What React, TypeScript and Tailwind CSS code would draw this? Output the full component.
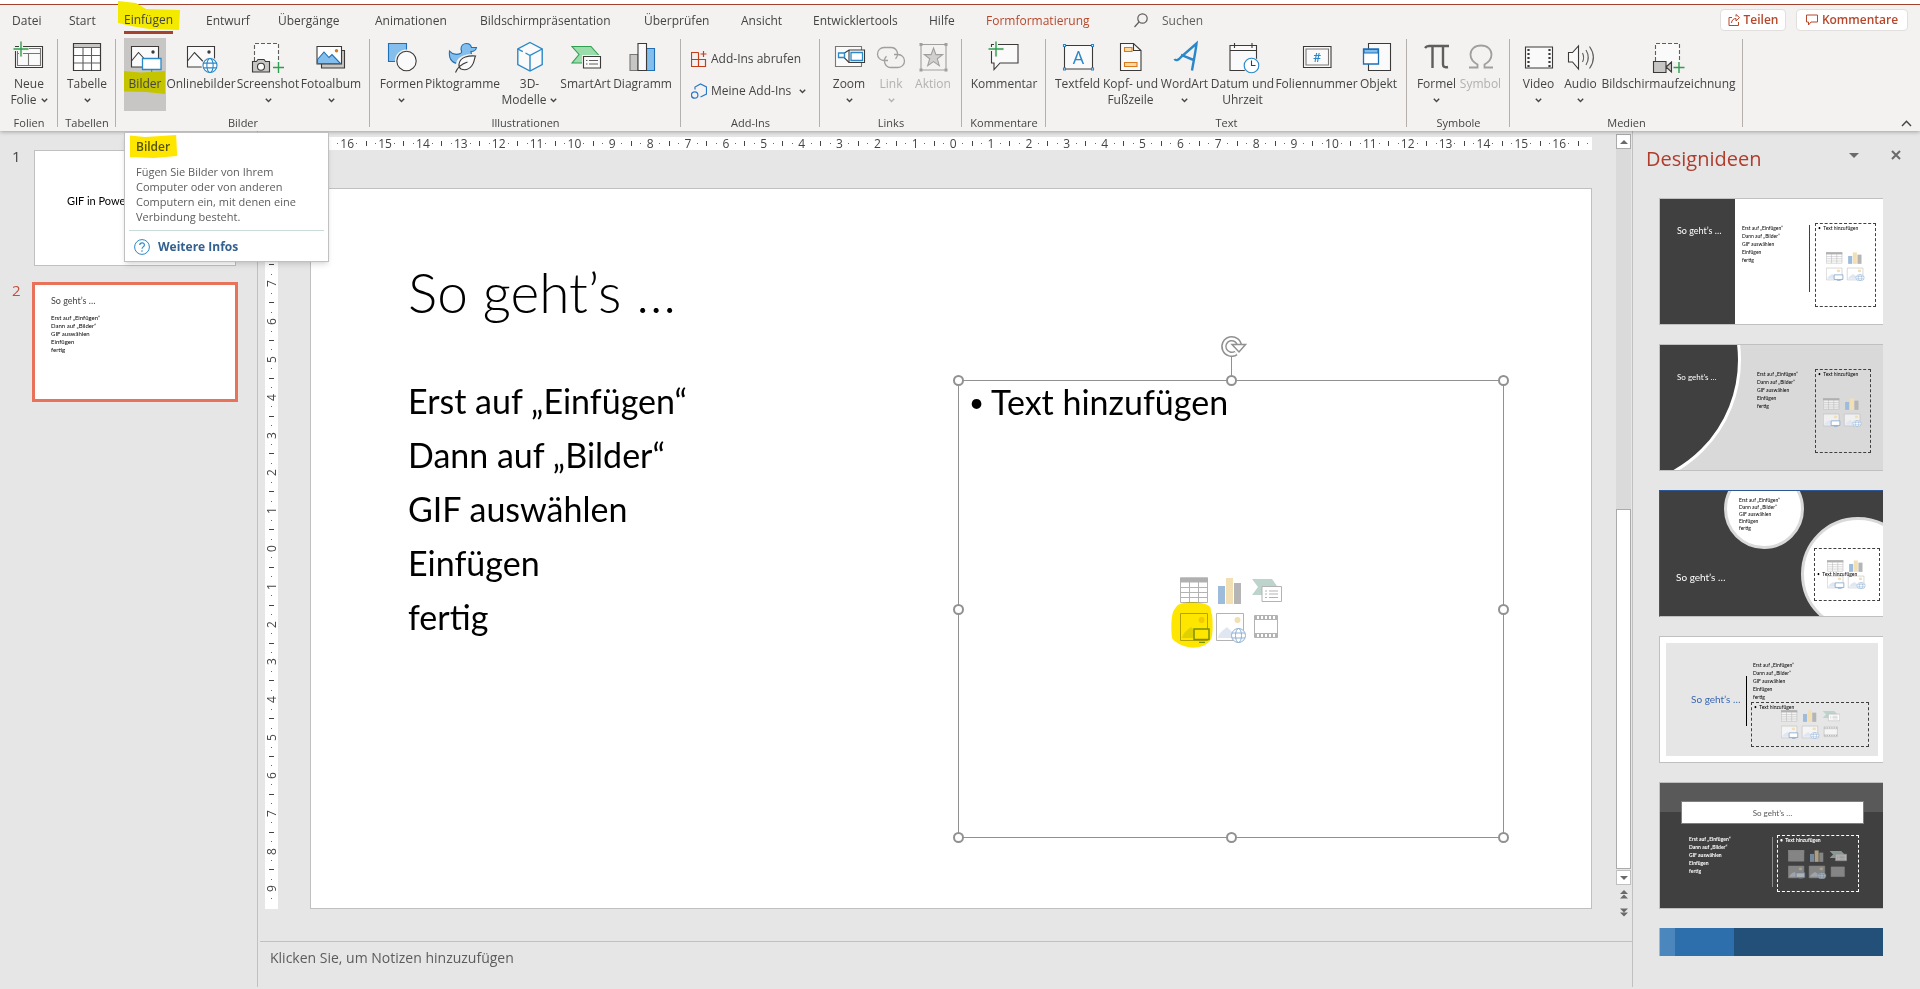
import React from 'react';
import clsx from 'clsx';

const DARK = '#3b3a39';
const BLUE = '#2b88c8';
const GREEN = '#2f9e4f';

const Chevron = ({ className = '' }: { className?: string }) => (
  <svg viewBox="0 0 7 5" className={clsx('inline-block h-[5px] w-[7px]', className)} fill="none" stroke="currentColor" strokeWidth="1.4">
    <path d="M0.8 0.8 3.5 3.5 6.2 0.8" />
  </svg>
);

const Icon = ({ children }: { children: React.ReactNode }) => (
  <svg viewBox="0 0 32 32" className="h-8 w-8 shrink-0 overflow-visible" fill="none" stroke={DARK} strokeWidth="1.1" aria-hidden="true">
    {children}
  </svg>
);

const Globe = ({ cx, cy, r }: { cx: number; cy: number; r: number }) => (
  <g stroke={BLUE} strokeWidth="1.1">
    <circle cx={cx} cy={cy} r={r} fill="#fff" />
    <ellipse cx={cx} cy={cy} rx={r * 0.45} ry={r} />
    <path d={`M${cx - r} ${cy - 2.4}h${r * 2}M${cx - r} ${cy + 2.4}h${r * 2}`} />
  </g>
);

const Plus = ({ x, y, r }: { x: number; y: number; r: number }) => (
  <path d={`M${x - r} ${y}h${r * 2}M${x} ${y - r}v${r * 2}`} stroke={GREEN} strokeWidth="1.4" />
);

const icons: Record<string, React.ReactNode> = {
  neueFolie: (
    <>
      <path d="M2.5 5.5h27v21h-27z" fill="#fafafa" />
      <path d="M4.5 7.5h23v17h-23zM4.5 12.5h23M15.5 12.5v12" stroke="#797775" />
      <path d="M8 0v16M0 8h16" stroke="#f3f2f1" strokeWidth="4" />
      <Plus x={8} y={8} r={7.5} />
    </>
  ),
  tabelle: (
    <>
      <path d="M2.5 2.5h27v27h-27z" fill="#fff" />
      <path d="M3 3h26v3.5h-26z" fill="#c8c6c4" stroke="none" />
      <path d="M2.5 6.5h27M2.5 14.5h27M2.5 22h27M12 6.5v23M20.5 6.5v23" stroke="#605e5c" />
      <path d="M2.5 2.5h27v27h-27z" />
    </>
  ),
  bilder: (
    <>
      <path d="M2.5 5.5h27v20.5h-27z" fill="#fafafa" />
      <path d="M2.5 20 9.5 11.5 15.5 18" />
      <circle cx="24" cy="11" r="1.7" fill={DARK} stroke="none" />
      <path d="M13.5 17.5h18.5v11h-18.5z" fill="#fff" stroke={BLUE} strokeWidth="1.3" />
      <path d="M22.7 28.5v3M19 31.5h7.5" stroke={GREEN} />
    </>
  ),
  onlinebilder: (
    <>
      <path d="M2.5 5.5h27v20.5h-27z" fill="#fafafa" />
      <path d="M2.5 20 9.5 11.5 18.5 21" />
      <circle cx="24" cy="11" r="1.7" fill={DARK} stroke="none" />
      <circle cx="25" cy="24.5" r="8.5" fill="#f3f2f1" stroke="none" />
      <Globe cx={25} cy={24.5} r={7} />
    </>
  ),
  screenshot: (
    <>
      <path d="M2.5 20V2.5h24V21" fill="#fafafa" strokeDasharray="4 2" stroke="#605e5c" />
      <path d="M.5 20.5h4l1.5-2h6l1.5 2h4v10.5h-17z" fill="#c8c6c4" />
      <circle cx="9" cy="25.7" r="3.5" fill="#fff" />
      <Plus x={26.5} y={26.5} r={5.5} />
    </>
  ),
  fotoalbum: (
    <>
      <path d="M6.5 9.5h23v17.5h-23z" fill="#c8c6c4" />
      <path d="M2 5.5h24.5v17.5h-24.5z" fill="#fff" />
      <path d="M2.5 18.5 9 11l5 5.5 3-3 8.5 9H2.5z" fill="#83beec" stroke="#1e6fb5" />
      <circle cx="21.5" cy="9.7" r="1.7" fill="#d87a1c" stroke="none" />
    </>
  ),
  formen: (
    <>
      <path d="M2.5 2.5h18v18h-18z" fill="#83beec" stroke="#1e6fb5" />
      <circle cx="20.5" cy="20" r="11.5" fill="#f3f2f1" stroke="none" />
      <circle cx="20.5" cy="20" r="9.7" fill="#fafafa" />
    </>
  ),
  piktogramme: (
    <>
      <path
        d="M2.5 10c3 3.5 7 4 11 2.5 2-.7 1-2.5.5-4.5 0-3.5 2.5-5.5 5.500-5.5 3 0 4.5 2 5 4h5c-.5 2.5-3 4-5.5 4 1 3 0 8-3 10-3 2.5-12 3-15.500 0-3-2.5-3.500-7-3-10.500z"
        fill="#83beec"
        stroke="#1e6fb5"
      />
      <path d="M28.500 14.500c-6-.5-17 .5-18 8.500-.3 2.500 1 4.500 2.500 5.500 4.500 1.500 9 .5 12-3.500 2.500-3.500 2-7 3.500-10.500z" fill="#f3f2f1" stroke="#f3f2f1" strokeWidth="3" />
      <path d="M28.500 15c-6-.5-15.500.5-16.500 8-.3 2 .5 4 2 5 4 1.500 8 .5 11-3.500 2.500-3.200 2-6.500 3.500-9.500zM8.500 31.500c2-5 6-8.500 12-10.500" fill="#fafafa" />
    </>
  ),
  modelle: (
    <>
      <path d="M16 1.5 28.2 8v15.5L16 30 3.8 23.5V8z" fill="#fafafa" stroke={BLUE} strokeWidth="1.4" />
      <path d="M3.8 8l5 2.7M16 30V14.5L28.2 8M11.500 12l4.500 2.500" stroke={BLUE} strokeWidth="1.4" />
    </>
  ),
  smartart: (
    <>
      <path d="M2 5.5h19l8 9-5 7.5H2l7-8.5z" fill="#9bdcab" stroke={GREEN} />
      <path d="M12 14h20v15h-20z" fill="#f3f2f1" stroke="none" />
      <path d="M13.5 15.5h17v11.500h-17z" fill="#fafafa" />
      <path d="M19 19.5h9M19 23h9M16 19.5h1.5M16 23h1.5" stroke="#605e5c" />
    </>
  ),
  diagramm: (
    <>
      <path d="M3 13.5h8v16h-8z" fill="#c8c6c4" stroke="#797775" />
      <path d="M19.5 7.5h8v22h-8z" fill="#83beec" stroke="#1e6fb5" />
      <path d="M11 2.5h8.5v27h-8.5z" fill="#fafafa" />
    </>
  ),
  zoom: (
    <>
      <path d="M2.5 5.5h26v20h-26z" fill="#fafafa" stroke="#797775" />
      <path d="M11.5 12 16 9h15.5v12.5H16L11.5 17z" fill="#fff" />
      <path d="M16 9v12.5" />
      <path d="M5.5 12h6v4.5h-6zM18 11.5h11.5v8H18z" stroke={BLUE} strokeWidth="1.3" />
    </>
  ),
  link: (
    <g stroke="#a19f9d" strokeWidth="1.3">
      <path d="M13 19.5H9A6.5 6.5 0 0 1 9 6.5h7a6.5 6.5 0 0 1 4.5 11.2" />
      <path d="M19 13.5h4a6.5 6.5 0 0 1 0 13h-7a6.5 6.5 0 0 1-4.5-11.2" />
    </g>
  ),
  aktion: (
    <g stroke="#a19f9d">
      <path d="M4 3.5h25v25.5h-25z" />
      <path d="M2.5 2h3v3h-3zM27.5 2h3v3h-3zM2.5 27.5h3v3h-3zM27.5 27.5h3v3h-3z" fill="#a19f9d" stroke="none" />
      <path d="M16.5 7l2.4 6.6h6.8l-5.4 4.2 2 6.800-5.800-4-5.800 4 2-6.800-5.400-4.200h6.800z" fill="#d2d0ce" />
    </g>
  ),
  kommentar: (
    <>
      <path d="M3.5 3.5h26.5v18.5H12l-6 6.5V22H3.5z" fill="#fafafa" />
      <path d="M8 0v16M0 8h16" stroke="#f3f2f1" strokeWidth="4" />
      <Plus x={8} y={8} r={7.5} />
    </>
  ),
  textfeld: (
    <>
      <path d="M2.5 4.5h28v23.5h-28z" fill="#fafafa" />
      <path d="M1.5 3.5h2v2h-2zM29.5 3.5h2v2h-2zM1.5 27h2v2h-2zM29.5 27h2v2h-2z" fill="#fff" stroke={BLUE} />
      <text x="16.5" y="22.5" textAnchor="middle" fontSize="18" fontFamily="Open Sans, sans-serif" fill={BLUE} stroke="none">A</text>
    </>
  ),
  kopf: (
    <>
      <path d="M5.5 2.5h13l7.5 7v20h-20.5z" fill="#fafafa" />
      <path d="M18.5 2.5v7H26" />
      <path d="M9.5 6.5h7.5v4H9.5zM9.5 21.5h12.5v4H9.5z" fill="#fcd9a0" stroke="#d87a1c" />
    </>
  ),
  wordart: (
    <path d="M5.5 18c1.5 2.5 4.5.5 7-2.500L27.5 2.5c-1 9-3 18-4.500 27M12 14c4 1 8 3.500 13 5" stroke={BLUE} strokeWidth="2.4" />
  ),
  datum: (
    <>
      <path d="M3 4.5h26.5v25H3zM3 9.5h26.5M7.5 2v5M25 2v5" fill="#fafafa" />
      <circle cx="24.5" cy="24.5" r="8.5" fill="#f3f2f1" stroke="none" />
      <circle cx="24.5" cy="24.5" r="7.3" fill="#fff" stroke={BLUE} />
      <path d="M24.5 19.5v5h4" />
    </>
  ),
  nummer: (
    <>
      <path d="M2.5 5.5h27.5v21h-27.5z" fill="#fafafa" />
      <path d="M5 8h22.5v16H5z" stroke="#797775" />
      <text x="16.2" y="20.5" textAnchor="middle" fontSize="12" fontWeight="600" fontFamily="Open Sans, sans-serif" fill={BLUE} stroke="none">#</text>
    </>
  ),
  objekt: (
    <>
      <path d="M5.5 2.5h22v27h-22z" fill="#fafafa" />
      <path d="M.5 8h15v15h-15z" fill="#fff" stroke="#1e6fb5" strokeWidth="1.3" />
      <path d="M1 8.5h14v3.5H1z" fill="#83beec" stroke="#1e6fb5" />
    </>
  ),
  formel: (
    <path d="M4 7c1-1.5 2-2 4-2h20M11.5 5.5v21.5M22 5.5v18c0 2.5 2 3.200 5 2.500" stroke="#605e5c" strokeWidth="2.4" />
  ),
  symbol: (
    <path d="M4 26.5h8.5v-3C8 21 5.5 17.5 5.5 13.5c0-5 4-9 10.5-9s10.5 4 10.5 9c0 4-2.5 7.500-7 10v3H28" stroke="#a19f9d" strokeWidth="1.8" />
  ),
  video: (
    <>
      <path d="M2.5 6h27v21h-27z" fill="#fafafa" />
      <path d="M5.5 8v18M26.5 8v18" strokeWidth="2.2" strokeDasharray="2 2" />
    </>
  ),
  audio: (
    <>
      <path d="M3.5 11.5h4l6-6.500v23l-6-7h-4z" fill="#fafafa" />
      <path d="M17.5 12c1.5 3 1.5 6 0 9M21 9c3 5 3 10 0 15M24.5 5.500c5 7 5 15 0 22" stroke="#605e5c" />
    </>
  ),
  aufzeichnung: (
    <>
      <path d="M2.5 20V2.5h24V21" fill="#fafafa" strokeDasharray="4 2" stroke="#605e5c" />
      <path d="M.5 20.5h12.5v11H.5zM13 26l5.500-5v10z" fill="#c8c6c4" />
      <Plus x={26} y={26.5} r={5.5} />
    </>
  ),
};

type Item = { icon: string; lines: string[]; width: string; chevron?: boolean; disabled?: boolean; active?: boolean };

const groups: { name: string; width: string; items: Item[] }[] = [
  { name: 'Folien', width: 'w-[58px]', items: [{ icon: 'neueFolie', lines: ['Neue', 'Folie'], width: 'w-14', chevron: true }] },
  { name: 'Tabellen', width: 'w-[58px]', items: [{ icon: 'tabelle', lines: ['Tabelle'], width: 'w-14', chevron: true }] },
  {
    name: 'Bilder',
    width: 'w-[254px]',
    items: [
      { icon: 'bilder', lines: ['Bilder'], width: 'w-[42px]', active: true },
      { icon: 'onlinebilder', lines: ['Onlinebilder'], width: 'w-[70px]' },
      { icon: 'screenshot', lines: ['Screenshot'], width: 'w-[64px]', chevron: true },
      { icon: 'fotoalbum', lines: ['Fotoalbum'], width: 'w-[62px]', chevron: true },
    ],
  },
  {
    name: 'Illustrationen',
    width: 'w-[311px]',
    items: [
      { icon: 'formen', lines: ['Formen'], width: 'w-[44px]', chevron: true },
      { icon: 'piktogramme', lines: ['Piktogramme'], width: 'w-[78px]' },
      { icon: 'modelle', lines: ['3D-', 'Modelle'], width: 'w-[56px]', chevron: true },
      { icon: 'smartart', lines: ['SmartArt'], width: 'w-[56px]' },
      { icon: 'diagramm', lines: ['Diagramm'], width: 'w-[58px]' },
    ],
  },
  { name: 'Add-Ins', width: 'w-[139px]', items: [] },
  {
    name: 'Links',
    width: 'w-[142px]',
    items: [
      { icon: 'zoom', lines: ['Zoom'], width: 'w-[42px]', chevron: true },
      { icon: 'link', lines: ['Link'], width: 'w-[42px]', chevron: true, disabled: true },
      { icon: 'aktion', lines: ['Aktion'], width: 'w-[42px]', disabled: true },
    ],
  },
  { name: 'Kommentare', width: 'w-[84px]', items: [{ icon: 'kommentar', lines: ['Kommentar'], width: 'w-[70px]' }] },
  {
    name: 'Text',
    width: 'w-[361px]',
    items: [
      { icon: 'textfeld', lines: ['Textfeld'], width: 'w-[48px]' },
      { icon: 'kopf', lines: ['Kopf- und', 'Fußzeile'], width: 'w-[58px]' },
      { icon: 'wordart', lines: ['WordArt'], width: 'w-[50px]', chevron: true },
      { icon: 'datum', lines: ['Datum und', 'Uhrzeit'], width: 'w-[66px]' },
      { icon: 'nummer', lines: ['Foliennummer'], width: 'w-[82px]' },
      { icon: 'objekt', lines: ['Objekt'], width: 'w-[42px]' },
    ],
  },
  {
    name: 'Symbole',
    width: 'w-[103px]',
    items: [
      { icon: 'formel', lines: ['Formel'], width: 'w-[44px]', chevron: true },
      { icon: 'symbol', lines: ['Symbol'], width: 'w-[44px]', disabled: true },
    ],
  },
  {
    name: 'Medien',
    width: 'w-[233px]',
    items: [
      { icon: 'video', lines: ['Video'], width: 'w-[42px]', chevron: true },
      { icon: 'audio', lines: ['Audio'], width: 'w-[42px]', chevron: true },
      { icon: 'aufzeichnung', lines: ['Bildschirmaufzeichnung'], width: 'w-[134px]' },
    ],
  },
];

const tabs = [
  { label: 'Datei', width: 'w-[57px]' },
  { label: 'Start', width: 'w-[55px]' },
  { label: 'Einfügen', width: 'w-[82px]' },
  { label: 'Entwurf', width: 'w-[72px]' },
  { label: 'Übergänge', width: 'w-[97px]' },
  { label: 'Animationen', width: 'w-[105px]' },
  { label: 'Bildschirmpräsentation', width: 'w-[164px]' },
  { label: 'Überprüfen', width: 'w-[97px]' },
  { label: 'Ansicht', width: 'w-[72px]' },
  { label: 'Entwicklertools', width: 'w-[116px]' },
  { label: 'Hilfe', width: 'w-[57px]' },
  { label: 'Formformatierung', width: 'w-[148px]' },
];

const RibbonButton = ({ icon, lines, width, chevron, disabled, active }: Item) => (
  <button
    disabled={disabled}
    className={clsx('flex h-[73px] flex-col items-center whitespace-nowrap pt-[3px] leading-4', width, active && 'bg-[#c8c6c4]', disabled && 'text-[#b3b0ad]')}
  >
    <Icon>{icons[icon]}</Icon>
    <span className="relative mt-[3px] flex w-full justify-center">
      {active && (
        <svg viewBox="0 0 42 23" className="absolute -top-[5px] left-0 h-[23px] w-full" preserveAspectRatio="none" aria-hidden="true">
          <path d="M0 0 16 1.5 41 0V23L22 21 0 20.5z" fill="#c5c400" />
        </svg>
      )}
      <span className="relative">{lines[0]}</span>
    </span>
    <span className="flex h-4 items-center gap-1">
      {lines[1]}
      {chevron && <Chevron />}
    </span>
  </button>
);

const AddIns = () => (
  <div className="flex w-full flex-col gap-4 pl-2.5 pt-[13px]">
    <button className="flex h-4 items-center gap-1 whitespace-nowrap">
      <svg viewBox="0 0 16 16" className="h-4 w-4" fill="none" stroke="#c43e1c" strokeWidth="1.2" aria-hidden="true">
        <path d="M7.5 1.5h-7v14h14v-7h-14M7.5 1.5v14M12.5 0v6M9.5 3h6" />
      </svg>
      Add-Ins abrufen
    </button>
    <button className="flex h-4 items-center gap-1 whitespace-nowrap">
      <svg viewBox="0 0 16 16" className="h-4 w-4" fill="none" stroke="#2b78c8" strokeWidth="1.2" aria-hidden="true">
        <path d="M4 6.5V4l5.5-3 6 3v7l-6 3" />
        <circle cx="3.7" cy="12" r="3.2" />
      </svg>
      Meine Add-Ins
      <Chevron className="ml-1" />
    </button>
  </div>
);

const Tooltip = () => (
  <div role="tooltip" className="absolute left-[124px] top-[132px] z-20 w-[205px] border border-[#c0c0c0] bg-white px-1 pb-1.5 text-[11px] leading-[15px] text-[#5c5c5c] shadow-md">
    <div className="relative flex h-[26px] w-fit items-center px-[7px] text-[12px] font-semibold text-[#55530a]">
      <svg viewBox="0 0 48 25" className="absolute inset-x-0 top-[1px] h-[25px] w-full" preserveAspectRatio="none" aria-hidden="true">
        <path d="M1 1.5 16 3l31-2 1 21-23 2-24-1z" fill="#ffe600" />
      </svg>
      <span className="relative">Bilder</span>
    </div>
    <p className="px-[7px] pb-1.5 pt-[5px]">
      Fügen Sie Bilder von Ihrem Computer oder von anderen Computern ein, mit denen eine Verbindung besteht.
    </p>
    <a href="#hilfe" className="flex items-center gap-2 border-t border-[#c9dcdc] pl-[5px] pt-2 text-[12px] font-bold leading-4 text-[#33608f]">
      <svg viewBox="0 0 16 16" className="h-4 w-4" fill="none" stroke={BLUE} aria-hidden="true">
        <circle cx="8" cy="8" r="7.4" />
        <path d="M5.7 6c.2-3 4.8-2.8 4.7 0 0 1.8-2.4 2-2.4 3.8M8 11.3v1.4" strokeWidth="1.2" />
      </svg>
      Weitere Infos
    </a>
  </div>
);

const lines = ['Erst auf „Einfügen“', 'Dann auf „Bilder“', 'GIF auswählen', 'Einfügen', 'fertig'];

const PlaceholderIcons = ({ cols = 3, className }: { cols?: 2 | 3; className: string }) => (
  <svg viewBox={cols === 3 ? '0 0 102 66' : '0 0 67 66'} preserveAspectRatio="none" className={className} fill="none" stroke="#b3b3b3" aria-hidden="true">
    <path d="M.5 1h27v24.5H.5z" fill="#fff" fillOpacity=".6" />
    <path d="M0 .5h28v5H0z" fill="#b0b0b0" stroke="none" />
    <path d="M.5 10.5h27M.5 15.5h27M.5 20.5h27M9.5 5v20.5M18.5 5v20.5" />
    <g stroke="none">
      <path d="M38 9h7v18h-7z" fill="#9dbbdb" />
      <path d="M46 1h7v26h-7z" fill="#f3dfb4" />
      <path d="M54 6h7v21h-7z" fill="#b5b5b5" />
    </g>
    <path d="M.5 36.5h27v27h-27zM36.5 36.5h27v27h-27z" fill="#fff" fillOpacity=".6" />
    <g fill="#dfe7f3" stroke="none">
      <path d="M2 61c1-5 5-8 9-11l5 5v6zM38 61c1-5 5-8 9-11l5 5v6z" />
      <circle cx="21.5" cy="43" r="3" fill="#f3dfb4" />
      <circle cx="57.5" cy="43" r="3" fill="#f3dfb4" />
    </g>
    <path d="M14 52h15v10.5H14zM19 65.5h6" fill="#fff" stroke="#7ba0cc" strokeWidth="1.5" />
    <g stroke="#8fb0d4">
      <circle cx="58.5" cy="58.5" r="7" fill="#fff" />
      <ellipse cx="58.5" cy="58.5" rx="3" ry="7" />
      <path d="M52 56h13M52 61h13" />
    </g>
    {cols === 3 && (
      <>
        <path d="M72 2h20l5 7v9H72l6-8z" fill="#bcd4cb" stroke="none" />
        <path d="M82 9.5h19.5v15H82z" fill="#fff" />
        <path d="M85 14h2M85 17h2M85 20.5h2M89 14h9M89 17h9M89 20.5h9" />
        <path d="M74.5 38.5h23v22h-23z" fill="#fff" fillOpacity=".6" />
        <path d="M75 40.5h23M75 58.5h23" strokeWidth="3" strokeDasharray="2 2" />
        <path d="M74.5 42.5h23M74.5 56.5h23" />
      </>
    )}
  </svg>
);

// four marks per centimetre: number, dot, half tick, dot
const Ruler = ({ quarters, vertical }: { quarters: number; vertical?: boolean }) => {
  const marks = Array.from({ length: quarters * 2 + 1 }, (_, i) => i - quarters);
  return (
    <div className={clsx('flex bg-white text-[12px] leading-[13px] text-[#444]', vertical ? 'w-[13px] shrink-0 flex-col py-1.5' : 'h-[13px]')}>
      {marks.map((m) => (
        <span key={m} className="flex min-h-0 min-w-0 flex-1 basis-0 items-center justify-center">
          {m % 4 === 0 && <span className={clsx(vertical && '-rotate-90')}>{Math.abs(m / 4)}</span>}
          {m % 4 !== 0 && m % 2 === 0 && <span className={clsx('bg-[#444]', vertical ? 'h-px w-[5px]' : 'h-[5px] w-px')} />}
          {m % 2 !== 0 && <span className="h-px w-px bg-[#666]" />}
        </span>
      ))}
    </div>
  );
};

const handles = [
  '-left-[6px] -top-[6px]',
  'left-1/2 -ml-[5px] -top-[6px]',
  '-right-[6px] -top-[6px]',
  '-left-[6px] top-1/2 -mt-[5px]',
  '-right-[6px] top-1/2 -mt-[5px]',
  '-left-[6px] -bottom-[6px]',
  'left-1/2 -ml-[5px] -bottom-[6px]',
  '-right-[6px] -bottom-[6px]',
];

const Slide = () => (
  <section className="flex aspect-video w-full flex-col border border-[#c0c0c0] bg-white px-[87px] pb-[70px] font-['Lato','Open_Sans',sans-serif] text-black">
    <h1 className="flex h-[191px] shrink-0 items-center px-[10px] pt-4 text-[55px] font-light leading-none">So geht’s …</h1>
    <div className="grid flex-1 grid-cols-2 gap-[14px]">
      <div className="-mt-1.5 px-[10px] text-[34px] leading-[54px]">
        {lines.map((line) => (
          <p key={line}>{line}</p>
        ))}
      </div>
      <div className="relative border border-[#919191]">
        <ul className="list-none px-[10px] text-[34px] leading-[42px]">
          <li className="flex">
            <span className="w-[22px] text-[26px]">•</span>Text hinzufügen
          </li>
        </ul>
        <div className="absolute inset-x-0 top-[196px] flex justify-center">
          <div className="relative">
            <svg viewBox="0 0 42 46" className="absolute -left-[9px] top-[25px] h-[46px] w-[42px]" aria-hidden="true">
              <path d="M9 2C16-1 34 0 38 4c3 2 1 6 3 8 1 8 1 22-1 25-4 8-17 10-23 8-6-1-14-5-16-9C0 28 0 16 2 10c2-4 4-7 7-8z" fill="#ffe600" />
            </svg>
            <PlaceholderIcons className="relative h-[66px] w-[102px] mix-blend-multiply" />
          </div>
        </div>
        <div className="absolute -top-[46px] left-1/2 -ml-[10px] flex w-[26px] flex-col">
          <svg viewBox="0 0 26 22" className="h-[22px] w-[26px]" fill="none" stroke="#919191" aria-hidden="true">
            <path d="M18.5 11a7.8 7.8 0 1 0-3.5 7" strokeWidth="5.5" />
            <path d="M18.5 11a7.8 7.8 0 1 0-3.5 7" stroke="#fff" strokeWidth="2.5" />
            <path d="M11 9.5h13.5l-6.5 7.5z" fill="#fff" strokeWidth="1.5" />
          </svg>
          <span className="ml-[10px] h-5 w-px bg-[#919191]" />
        </div>
        {handles.map((pos) => (
          <span key={pos} className={clsx('absolute h-[11px] w-[11px] rounded-full border-2 border-[#919191] bg-white', pos)} />
        ))}
      </div>
    </div>
  </section>
);

const MiniLines = ({ className = '' }: { className?: string }) => (
  <div className={clsx('whitespace-nowrap', className)}>
    {lines.map((line) => (
      <p key={line}>{line}</p>
    ))}
  </div>
);

const MiniTitle = ({ className = '' }: { className?: string }) => (
  <p className={clsx('whitespace-nowrap leading-3', className)}>So geht’s …</p>
);

const MiniBox = ({ className = '', children }: { className?: string; children: React.ReactNode }) => (
  <div className={clsx('flex flex-col border border-dashed', className)}>{children}</div>
);

const MiniHint = ({ className = '' }: { className?: string }) => (
  <p className={clsx('whitespace-nowrap pl-0.5 text-[5px] leading-[9px]', className)}>•&nbsp; Text hinzufügen</p>
);

const cardClass =
  "block h-[127px] w-full overflow-hidden border-l border-y border-[#c0c0c0] text-left font-['Lato','Open_Sans',sans-serif] text-[5px] leading-[8px] text-black";

const DesignIdeas = () => (
  <div className="flex w-[224px] flex-col gap-[19px]">
    <button className={clsx(cardClass, 'flex items-stretch bg-white')}>
      <span className="w-[75px] bg-[#404040] pl-[17px] pt-[26px] text-white">
        <MiniTitle className="text-[9px]" />
      </span>
      <MiniLines className="w-[74px] pl-[7px] pt-[25px]" />
      <span className="mb-8 mt-[26px] w-px bg-[#404040]" />
      <MiniBox className="mb-[17px] ml-[5px] mt-6 w-[61px] border-[#404040]">
        <MiniHint />
        <PlaceholderIcons cols={2} className="ml-2.5 mt-[19px] h-[29px] w-[39px]" />
      </MiniBox>
    </button>
    <button className={clsx(cardClass, 'relative flex items-stretch bg-[#d9d9d9]')}>
      <svg viewBox="0 0 90 126" className="absolute left-0 top-0 h-[126px] w-[90px]" aria-hidden="true">
        <circle cx="-48" cy="15" r="127.5" fill="#404040" stroke="#fff" strokeWidth="3" />
      </svg>
      <MiniTitle className="relative w-[97px] pl-[17px] pt-[26px] text-[8px] text-white" />
      <MiniLines className="w-[58px] pt-[25px]" />
      <MiniBox className="mb-[17px] mt-6 w-[56px] border-[#404040]">
        <MiniHint />
        <PlaceholderIcons cols={2} className="ml-[7px] mt-[19px] h-[29px] w-[39px]" />
      </MiniBox>
    </button>
    <button className={clsx(cardClass, 'relative flex items-stretch border-l-[#2b5797] border-t-[#2b5797] bg-[#404040]')}>
      <svg viewBox="0 0 223 126" className="absolute left-0 top-0 h-[126px] w-[223px]" fill="#fff" stroke="#d9d9d9" strokeWidth="3" aria-hidden="true">
        <circle cx="104" cy="18" r="38.5" />
        <circle cx="198" cy="83" r="55.5" />
      </svg>
      <MiniTitle className="relative w-[79px] pl-4 pt-20 text-[10px] text-white" />
      <MiniLines className="relative w-[75px] pt-[6px] leading-[7px]" />
      <MiniBox className="relative mb-[15px] mt-[57px] w-[66px] border-[#404040]">
        <PlaceholderIcons cols={2} className="ml-3 mt-[11px] h-[29px] w-[39px]" />
        <MiniHint className="-mt-[19px]" />
      </MiniBox>
    </button>
    <button className={clsx(cardClass, 'flex bg-white pb-[6px] pl-[6px] pr-[5px] pt-[6px]')}>
      <span className="flex flex-1 items-stretch self-stretch bg-[#e6e6e6]">
        <MiniTitle className="w-20 pl-[25px] pt-[50px] text-[10px] text-[#3a66b1]" />
        <span className="mb-[30px] mt-[33px] w-px bg-black" />
        <span className="flex flex-col pl-1 pt-[18px]">
          <MiniLines className="pl-0.5" />
          <MiniBox className="mt-[1px] h-[45px] w-[118px] border-[#404040]">
            <MiniHint />
            <PlaceholderIcons className="-mt-0.5 ml-[29px] h-[29px] w-[59px]" />
          </MiniBox>
        </span>
      </span>
    </button>
    <button className={clsx(cardClass, 'flex flex-col bg-[linear-gradient(#595959_29px,#404040_29px)]')}>
      <span className="ml-[21px] mt-[18px] flex h-[23px] w-[183px] items-center justify-center border border-[#7f7f7f] bg-white">
        <MiniTitle className="text-[8px] text-[#595959]" />
      </span>
      <span className="flex pl-[29px] pt-[11px] text-white">
        <MiniLines className="w-[83px] font-bold" />
        <span className="mt-0.5 h-[50px] w-px bg-[#8c8c8c]" />
        <MiniBox className="ml-1 h-[57px] w-[82px] border-white">
          <MiniHint className="font-bold" />
          <PlaceholderIcons className="ml-2.5 mt-[5px] h-[29px] w-[59px] opacity-60" />
        </MiniBox>
      </span>
    </button>
    <button aria-label="Blau" className="flex h-7 w-full border-l border-[#9db8d0] bg-[#225079]">
      <span className="h-7 w-[15px] bg-[#4b86bc]" />
      <span className="h-7 w-[59px] bg-[#2d6fac]" />
    </button>
  </div>
);

const ScrollBar = () => (
  <div className="flex w-[15px] shrink-0 flex-col pb-6 pt-[3px]">
    <button aria-label="Nach oben" className="flex h-[15px] shrink-0 items-center justify-center border border-[#ababab] bg-white">
      <svg viewBox="0 0 8 4" className="h-1 w-2"><path d="M0 4 4 0l4 4z" fill="#6a6a6a" /></svg>
    </button>
    <div className="flex flex-1 flex-col justify-end bg-[#dadada]">
      <div className="h-1/2 border border-[#ababab] bg-white" />
    </div>
    <button aria-label="Nach unten" className="mt-px flex h-[15px] shrink-0 items-center justify-center border border-[#c0c0c0] bg-white">
      <svg viewBox="0 0 8 4" className="h-1 w-2"><path d="M0 0h8L4 4z" fill="#6a6a6a" /></svg>
    </button>
    <button aria-label="Vorherige Folie" className="mt-[5px] flex shrink-0 justify-center">
      <svg viewBox="0 0 8 9" className="h-[9px] w-2"><path d="M0 4 4 0l4 4zM0 8.5l4-4 4 4z" fill="#6a6a6a" /></svg>
    </button>
    <button aria-label="Nächste Folie" className="mt-[9px] flex shrink-0 justify-center">
      <svg viewBox="0 0 8 9" className="h-[9px] w-2"><path d="M0 .5h8l-4 4zM0 4.5h8l-4 4z" fill="#6a6a6a" /></svg>
    </button>
  </div>
);

export default function App() {
  return (
    <div className="relative flex h-screen min-h-[720px] w-full flex-col overflow-hidden bg-[#e6e6e6] font-['Open_Sans','Noto_Sans',sans-serif] text-[12px] text-[#444]">
      <header className="relative z-10 mt-1 shrink-0 border-t border-[#a4432d] bg-[#f3f2f1] shadow-[0_1px_4px_rgba(0,0,0,0.3)] before:absolute before:inset-x-0 before:-top-[5px] before:h-1 before:bg-white">
        <nav className="flex h-[33px] items-start pl-3">
          {tabs.map(({ label, width }) => (
            <button
              key={label}
              className={clsx('relative flex h-[29px] shrink-0 items-center whitespace-nowrap pt-0.5', width, label === 'Formformatierung' && 'text-[#b7472a]')}
            >
              {label === 'Einfügen' ? (
                <>
                  <svg viewBox="0 0 64 31" className="absolute -left-1.5 -top-1 h-[31px] w-16" aria-hidden="true">
                    <path d="M0 0 18 2l10 6 34 1-1 20-30-1-18-3-13-3z" fill="#f4ea00" />
                  </svg>
                  <span className="relative flex h-[27px] items-center border-b-[3px] border-[#a4432d] pt-0.5">{label}</span>
                </>
              ) : (
                label
              )}
            </button>
          ))}
          <label className="flex h-[29px] items-center gap-3.5 pt-0.5 text-[#605e5c]">
            <svg viewBox="0 0 14 15" className="h-[15px] w-[14px]" fill="none" stroke="#605e5c" strokeWidth="1.2" aria-hidden="true">
              <circle cx="8.5" cy="5.5" r="4.7" />
              <path d="M5 9 .5 14" />
            </svg>
            <input placeholder="Suchen" aria-label="Suchen" className="w-32 bg-transparent outline-none placeholder:text-[#605e5c]" />
          </label>
          <div className="ml-auto mt-1 flex gap-2.5 pr-3 font-semibold text-[#b7472a]">
            <button className="flex h-[22px] w-[66px] items-center justify-center gap-1 rounded-sm border border-[#e1dfdd] bg-white">
              <svg viewBox="0 0 12 12" className="h-3 w-3" fill="none" stroke="#b7472a" aria-hidden="true">
                <path d="M4 3.5H1v8h9.5V8M3.5 9c.3-3 2-4.5 4.5-4.5V7l3.5-3.5L8 .5v2" />
              </svg>
              Teilen
            </button>
            <button className="flex h-[22px] w-[112px] items-center justify-center gap-1 rounded-sm border border-[#e1dfdd] bg-white">
              <svg viewBox="0 0 12 12" className="h-3 w-3" fill="none" stroke="#b7472a" aria-hidden="true">
                <path d="M.5 1h11v7H5l-2.5 3V8h-2z" />
              </svg>
              Kommentare
            </button>
          </div>
        </nav>
        <div className="flex h-[93px]">
          {groups.map(({ name, width, items }) => (
            <section key={name} className={clsx('relative flex shrink-0 flex-col', width)}>
              <div className="flex h-[77px] justify-center">
                {items.length === 0 ? <AddIns /> : items.map((item) => <RibbonButton key={item.icon} {...item} />)}
              </div>
              <h2 className="text-center text-[11px] leading-4">{name}</h2>
              <span className="absolute bottom-1 right-0 top-px w-px bg-[#b3b0ad]" />
            </section>
          ))}
          <button aria-label="Menüband reduzieren" className="ml-auto mr-2 self-end pb-1">
            <svg viewBox="0 0 11 7" className="h-[7px] w-[11px]" fill="none" stroke="#444" strokeWidth="1.4">
              <path d="M1 6 5.5 1.2 10 6" />
            </svg>
          </button>
        </div>
      </header>
      <Tooltip />
      <div className="flex min-h-0 flex-1">
        <aside className="mb-0.5 flex w-[258px] shrink-0 flex-col gap-4 border-r border-[#c0c0c0] pl-3 pt-[19px]">
          <button className="flex items-start gap-[13px] text-left">
            <span className="w-[9px] text-[15px] leading-3">1</span>
            <span className="flex h-[116px] w-[202px] flex-col items-start border border-[#c0c0c0] bg-white pl-8 pt-[43px] font-['Lato',sans-serif] text-[11px] leading-[14px] text-black">
              GIF in Powe
            </span>
          </button>
          <button className="flex items-start gap-[11px] text-left">
            <span className="w-[9px] text-[15px] leading-4 text-[#c0503c]">2</span>
            <span className="flex h-[120px] w-[206px] flex-col gap-[7px] border-[3px] border-[#e8735a] bg-white pl-4 pt-[10px] font-['Lato',sans-serif] text-[6px] leading-[8px] text-black">
              <MiniTitle className="text-[9px] text-[#444]" />
              <MiniLines />
            </span>
          </button>
        </aside>
        <main className="flex min-w-0 flex-1 flex-col">
          <div className="flex min-h-0 flex-1 pr-px">
            <div className="flex min-w-0 flex-1 flex-col pl-[7px] pr-6 pt-1.5">
              <div className="pl-[49px]">
                <Ruler quarters={67} />
              </div>
              <div className="mt-[38px] flex gap-8">
                <Ruler quarters={37} vertical />
                <Slide />
              </div>
            </div>
            <ScrollBar />
          </div>
          <div className="ml-0.5 h-12 shrink-0 border-t border-[#c0c0c0]">
            <textarea
              aria-label="Notizen"
              placeholder="Klicken Sie, um Notizen hinzuzufügen"
              className="h-10 w-full resize-none bg-transparent px-2.5 pt-1 text-[14px] leading-6 outline-none placeholder:text-[#5c5c5c]"
            />
          </div>
        </main>
        <aside className="mb-0.5 w-[288px] shrink-0 border-l border-[#c0c0c0] pl-[13px] pt-3">
          <div className="flex items-center pr-[19px]">
            <h2 className="flex-1 text-[20px] leading-8 text-[#b03c2c]">Designideen</h2>
            <button aria-label="Optionen" className="mb-2 mr-8">
              <svg viewBox="0 0 10 5" className="h-[5px] w-2.5"><path d="M0 0h10L5 5z" fill="#6a6a6a" /></svg>
            </button>
            <button aria-label="Schließen" className="mb-2">
              <svg viewBox="0 0 10 10" className="h-2.5 w-2.5" stroke="#6a6a6a" strokeWidth="2"><path d="M1 1l8 8M9 1 1 9" /></svg>
            </button>
          </div>
          <div className="pl-[13px] pt-[23px]">
            <DesignIdeas />
          </div>
        </aside>
      </div>
    </div>
  );
}
